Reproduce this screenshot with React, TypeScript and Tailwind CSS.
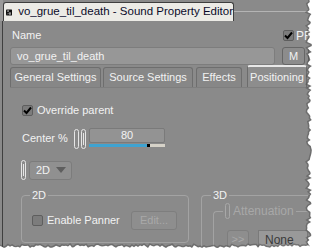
import React from "react";

// jagged torn-paper edge along right and bottom
const tornPoints = (() => {
  const pts: string[] = [];
  let seed = 7;
  const rnd = () => {
    seed = (seed * 9301 + 49297) % 233280;
    return seed / 233280;
  };
  for (let y = 0; y <= 245; y += 2) {
    pts.push(`${307 + rnd() * 5},${y}`);
  }
  for (let x = 310; x >= 0; x -= 2) {
    pts.push(`${x},${245 + rnd() * 3}`);
  }
  return pts.join(" ");
})();

const TornEdge = () => (
  <svg className="absolute inset-0 pointer-events-none" width="314" height="249">
    <polyline points={tornPoints} fill="none" stroke="#4a4a4a" strokeWidth="3" opacity="0.45" />
    <polygon points={`${tornPoints} 0,249 314,249 314,0`} fill="#ffffff" />
  </svg>
);

const Pill = ({ tick = false }: { tick?: boolean }) => (
  <span className="relative inline-block w-[5px] h-[20px] rounded-full border border-[#e6e6e6]">
    {tick && <span className="absolute left-[1px] top-[3px] bottom-[3px] w-px bg-[#e6e6e6]" />}
  </span>
);

const Tab = ({ label, w, active = false }: { label: string; w: string; active?: boolean }) => (
  <div
    className={`${w} shrink-0 flex items-center justify-center whitespace-nowrap rounded-t-[3px] border border-b-0 ${
      active
        ? "h-[22px] border-[#6c6c6c] border-t-2 border-t-[#e8e8e8] bg-[#8d8d8d]"
        : "h-[20px] border-[#6e6e6e] bg-[#878787]"
    }`}
  >
    {label}
  </div>
);

const Check = ({ checked = false }: { checked?: boolean }) => (
  <span className="flex shrink-0 items-center justify-center w-[11px] h-[11px] rounded-[2px] border border-[#5e5e5e] bg-[#7c7c7c]">
    {checked && (
      <svg width="9" height="9" viewBox="0 0 9 9">
        <path d="M1 4.5 L3.5 7 L8 1.5" stroke="#000" strokeWidth="2" fill="none" />
      </svg>
    )}
  </span>
);

export default function App() {
  return (
    <div className="relative w-[314px] h-[249px] overflow-hidden bg-[#8a8a8a] text-[11px] text-[#f2f2f2] font-['Liberation_Sans',sans-serif] leading-none whitespace-nowrap">
      {/* title tab */}
      <div className="flex h-[21px]">
        <div className="w-[3px] bg-[#9a9a9a]" />
        <div className="mt-[2px] w-[231px] shrink-0 h-[19px] flex items-center gap-[6px] pl-[2px] rounded-t-[3px] border border-b-0 border-[#3e3e3e] bg-[#ecebe6] text-[11.5px] text-[#0b0b2a]">
          <svg width="15" height="15" viewBox="0 0 15 15">
            <rect x="0" y="0" width="15" height="15" rx="2" fill="#111" />
            <path d="M3 3 L6 3 L6 6 M3 6 L6 3 M7 8 H12 M7 10 H12 M7 12 H12 M3 12 L6 9" stroke="#fff" strokeWidth="1.2" fill="none" />
          </svg>
          <span>vo_grue_til_death - Sound Property Editor</span>
        </div>
        <div className="flex-1 mt-[11px] h-px bg-[#b4b4b4]" />
      </div>

      {/* panel */}
      <div className="ml-[2px] w-[330px] h-[228px] border-l border-[#3f3f3f] pl-[7px] pt-[9px]">
        <div className="flex items-center h-[11px]">
          <span className="pl-[2px] w-[273px]">Name</span>
          <span className="flex items-center gap-[2px]">
            <Check checked />
            <span className="text-[12px]">PF</span>
          </span>
        </div>
        <div className="mt-[6px] flex items-center h-[18px]">
          <div className="w-[265px] h-[18px] flex items-center pl-[6px] rounded-[3px] border border-[#7d7d7d] bg-[#979797]">
            vo_grue_til_death
          </div>
          <div className="ml-[7px] w-[23px] h-[18px] flex items-center justify-center rounded-[3px] border border-[#666] bg-[#8c8c8c]">
            M
          </div>
          <div className="ml-[3px] w-[12px] h-[18px] rounded-l-[3px] border border-r-0 border-[#666]" />
        </div>

        {/* tabs */}
        <div className="mt-[1px] flex items-end h-[22px] border-b border-[#7e7e7e]">
          <Tab label="General Settings" w="w-[91px]" />
          <div className="w-[2px]" />
          <Tab label="Source Settings" w="w-[90px]" />
          <div className="w-[3px]" />
          <Tab label="Effects" w="w-[46px]" />
          <div className="w-[5px]" />
          <Tab label="Positioning" w="w-[60px]" active />
        </div>

        {/* positioning content */}
        <div className="pl-[12px] pt-[17px] w-[298px]">
          <div className="flex items-center gap-[4px] h-[11px]">
            <Check checked />
            <span>Override parent</span>
          </div>

          <div className="mt-[12px] flex items-start">
            <span className="mt-[5px] w-[52px]">Center %</span>
            <div className="mt-[1px] flex gap-[2px]">
              <Pill />
              <Pill tick />
            </div>
            <div className="ml-[3px] flex flex-col">
              <div className="w-[76px] h-[15px] flex items-center justify-center rounded-[2px] border border-[#7a7a7a] bg-[#939393]">
                80
              </div>
              <div className="mt-[1px] flex h-[3px]">
                <div className="w-[58px] bg-[#3fa3d1]" />
                <div className="w-[3px] bg-[#000]" />
                <div className="flex-1 bg-[#d6d2c8]" />
              </div>
            </div>
          </div>

          <div className="mt-[11px] flex items-center gap-[3px] -ml-[1px]">
            <Pill tick />
            <div className="w-[43px] h-[19px] flex items-center justify-between pl-[6px] pr-[5px] rounded-[3px] border border-[#7c7c7c] bg-[#909090]">
              <span>2D</span>
              <svg width="10" height="6" viewBox="0 0 10 6">
                <path d="M0 0 H10 L5 6 Z" fill="#5e5e5e" />
              </svg>
            </div>
          </div>

          {/* groups */}
          <div className="mt-[15px] -ml-[1px] flex gap-[12px]">
            <div className="relative w-[168px] shrink-0 h-[48px] rounded-[4px] border border-[#a3a3a3]">
              <span className="absolute -top-[6px] left-[8px] px-[2px] bg-[#8a8a8a]">2D</span>
              <div className="mt-[15px] ml-[10px] flex items-center">
                <Check />
                <span className="ml-[4px]">Enable Panner</span>
                <div className="ml-auto mr-[11px] w-[46px] h-[19px] flex items-center justify-center rounded-[3px] border border-[#7e7e7e] bg-[#8e8e8e] text-[#a9a9a9]">
                  Edit...
                </div>
              </div>
            </div>
            <div className="relative flex-1 h-[60px] rounded-tl-[4px] border-l border-t border-[#a3a3a3]">
              <span className="absolute -top-[6px] left-[9px] px-[2px] bg-[#8a8a8a]">3D</span>
              <div className="relative mt-[15px] ml-[11px] h-[50px] rounded-tl-[4px] border-l border-t border-[#a3a3a3]">
                <span className="absolute -top-[9px] left-[9px] flex items-center gap-[3px] px-[2px] bg-[#8a8a8a] text-[12px] text-[#a8a8a8]">
                  <span className="inline-block w-[5px] h-[16px] rounded-full border border-[#a8a8a8]" />
                  Attenuation
                </span>
                <div className="mt-[18px] ml-[13px] flex gap-[9px]">
                  <div className="w-[22px] h-[19px] flex items-center justify-center rounded-[3px] border border-[#7e7e7e] bg-[#8e8e8e] text-[#a9a9a9]">
                    &gt;&gt;
                  </div>
                  <div className="flex-1 h-[19px] flex items-center pl-[6px] border border-[#7a7a7a] bg-[#999] text-[12px] text-[#3a3a3a]">
                    None
                  </div>
                </div>
              </div>
            </div>
          </div>
        </div>
      </div>

      <TornEdge />
    </div>
  );
}
